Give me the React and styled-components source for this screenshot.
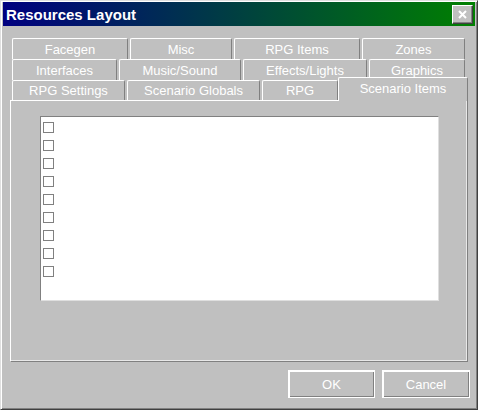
import React from "react";
import styled, { createGlobalStyle } from "styled-components";

const Global = createGlobalStyle`
  html, body { margin: 0; padding: 0; background: #c0c0c0; }
  * { box-sizing: border-box; }
`;

const Window = styled.div`
  width: 478px;
  height: 410px;
  background: #c0c0c0;
  border-top: 1px solid #dfdfdf;
  border-left: 1px solid #dfdfdf;
  border-right: 1px solid #404040;
  border-bottom: 1px solid #404040;
  box-shadow: inset 1px 1px 0 #ffffff, inset -1px -1px 0 #808080;
  padding: 1px 2px 2px 2px;
  display: flex;
  flex-direction: column;
  font-family: "Liberation Sans", Arial, sans-serif;
`;

const TitleBar = styled.div`
  height: 24px;
  display: flex;
  align-items: center;
  justify-content: space-between;
  padding: 0 2px 0 3px;
  background: linear-gradient(to right, #000080, #008000);
`;

const TitleText = styled.span`
  color: #ffffff;
  font-weight: bold;
  font-size: 15px;
  line-height: 24px;
  padding-top: 1px;
`;

const CloseButton = styled.div`
  width: 21px;
  height: 19px;
  background: #c0c0c0;
  border-top: 1px solid #ffffff;
  border-left: 1px solid #ffffff;
  border-right: 1px solid #404040;
  border-bottom: 1px solid #404040;
  box-shadow: inset -1px -1px 0 #808080;
  display: flex;
  align-items: center;
  justify-content: center;
`;

const Body = styled.div`
  padding: 12px 0 0 7px;
  display: flex;
  flex-direction: column;
`;

const TabRows = styled.div`
  display: flex;
  flex-direction: column;
  padding-left: 2px;
`;

const TabRow = styled.div`
  display: flex;
  align-items: flex-end;
  height: ${(p) => p.$h}px;
`;

const Tab = styled.div`
  width: ${(p) => p.$w}px;
  height: ${(p) => (p.$selected ? 24 : p.$h)}px;
  margin-left: ${(p) => (p.$first || p.$selected ? 0 : 2)}px;
  margin-bottom: ${(p) => (p.$selected ? -1 : 0)}px;
  position: ${(p) => (p.$selected ? "relative" : "static")};
  z-index: ${(p) => (p.$selected ? 1 : "auto")};
  background: #c0c0c0;
  border-top: 1px solid #ffffff;
  border-left: 1px solid #ffffff;
  border-right: 1px solid #808080;
  border-radius: 2px 2px 0 0;
  color: #ffffff;
  font-size: 13px;
  display: flex;
  align-items: center;
  justify-content: center;
  white-space: nowrap;
  padding-bottom: ${(p) => (p.$selected ? 3 : 0)}px;
`;

const Panel = styled.div`
  width: 458px;
  height: 262px;
  border-top: 1px solid #ffffff;
  border-left: 1px solid #ffffff;
  border-right: 1px solid #808080;
  border-bottom: 1px solid #808080;
  box-shadow: inset -1px -1px 0 #e8e8e8;
  padding: 15px 0 0 29px;
`;

const ListBox = styled.div`
  width: 399px;
  height: 185px;
  background: #ffffff;
  border-top: 1px solid #808080;
  border-left: 1px solid #808080;
  border-right: 1px solid #dfdfdf;
  border-bottom: 1px solid #dfdfdf;
  padding: 5px 0 0 2px;
  display: flex;
  flex-direction: column;
  gap: 7px;
`;

const CheckBox = styled.div`
  width: 11px;
  height: 11px;
  border: 1px solid #808080;
  background: #ffffff;
`;

const ButtonRow = styled.div`
  display: flex;
  justify-content: flex-end;
  gap: 7px;
  padding: 8px 5px 0 0;
`;

const Button = styled.div`
  width: ${(p) => p.$w}px;
  height: 28px;
  border: 1px solid #ffffff;
  box-shadow: inset 1px 1px 0 #ffffff, inset -1px -1px 0 #808080;
  background: #c0c0c0;
  color: #ffffff;
  font-size: 13px;
  display: flex;
  align-items: center;
  justify-content: center;
`;

const rows = [
  {
    h: 21,
    tabs: [
      ["Facegen", 116],
      ["Misc", 102],
      ["RPG Items", 126],
      ["Zones", 103],
    ],
  },
  {
    h: 21,
    tabs: [
      ["Interfaces", 105],
      ["Music/Sound", 122],
      ["Effects/Lights", 124],
      ["Graphics", 96],
    ],
  },
  {
    h: 20,
    tabs: [
      ["RPG Settings", 113],
      ["Scenario Globals", 133],
      ["RPG", 76],
      ["Scenario Items", 130, true],
    ],
  },
];

export default function App() {
  return (
    <>
      <Global />
      <Window>
        <TitleBar>
          <TitleText>Resources Layout</TitleText>
          <CloseButton>
            <svg width="9" height="9" viewBox="0 0 9 9">
              <path d="M1 1 L8 8 M8 1 L1 8" stroke="#ffffff" strokeWidth="2" />
            </svg>
          </CloseButton>
        </TitleBar>
        <Body>
          <TabRows>
            {rows.map((row, ri) => (
              <TabRow key={ri} $h={row.h}>
                {row.tabs.map(([label, w, sel], ti) => (
                  <Tab key={label} $w={w} $h={row.h} $first={ti === 0} $selected={!!sel}>
                    {label}
                  </Tab>
                ))}
              </TabRow>
            ))}
          </TabRows>
          <Panel>
            <ListBox>
              {Array.from({ length: 9 }).map((_, i) => (
                <CheckBox key={i} />
              ))}
            </ListBox>
          </Panel>
        </Body>
        <ButtonRow>
          <Button $w={87}>OK</Button>
          <Button $w={88}>Cancel</Button>
        </ButtonRow>
      </Window>
    </>
  );
}
